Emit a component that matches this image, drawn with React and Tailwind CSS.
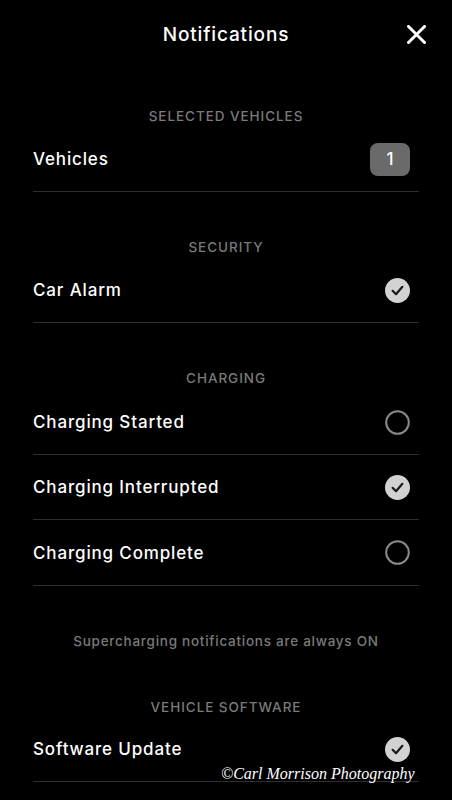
import React from "react";

const font = { fontFamily: "Inter, 'Noto Sans', sans-serif" };

function Checked() {
  return (
    <svg width="25" height="25" viewBox="0 0 25 25">
      <circle cx="12.5" cy="12.5" r="12.5" fill="#d2d2d2" />
      <path d="M7.6 12.8 L11 16.2 L17.4 8.8" fill="none" stroke="#1a1a1a" strokeWidth="2.2" strokeLinecap="round" strokeLinejoin="round" />
    </svg>
  );
}

function Unchecked() {
  return (
    <svg width="25" height="25" viewBox="0 0 25 25">
      <circle cx="12.5" cy="12.5" r="11.3" fill="none" stroke="#8a8a8a" strokeWidth="2" />
    </svg>
  );
}

function Row({ label, right, h = "h-[65px]" }) {
  return (
    <div className={`flex ${h} items-center justify-between border-b border-[#2e2e2e]`}>
      <span className="pt-[2px] text-[17px] font-medium tracking-[0.05em] text-white">{label}</span>
      <div className="pr-[9px] flex items-center">{right}</div>
    </div>
  );
}

export default function App() {
  return (
    <div className="relative w-[452px] h-[800px] overflow-hidden bg-black" style={font}>
      <div className="relative flex h-[68px] items-center justify-center">
        <span className="pt-[2px] text-[19px] font-medium text-white tracking-[0.045em]">Notifications</span>
        <svg className="absolute right-[26px] top-[25px]" width="19" height="19" viewBox="0 0 19 19">
          <path d="M1.5 1.5 L17.5 17.5 M17.5 1.5 L1.5 17.5" stroke="#fff" strokeWidth="3" strokeLinecap="round" />
        </svg>
      </div>
      <div className="px-[33px]">
        <div className="pt-[39px] flex justify-center">
          <div className="h-5 leading-[18px] text-[13.5px] font-medium tracking-[0.07em] text-[#7a7a7a]">SELECTED VEHICLES</div>
        </div>
        <Row
          label="Vehicles"
          right={
            <div className="mt-[1px] flex h-[33px] w-[40px] items-center justify-center rounded-[8px] bg-[#6a6a6a] text-[17px] font-medium text-white">
              1
            </div>
          }
        />
        <div className="pt-[46px] flex justify-center">
          <div className="h-5 leading-[18px] text-[13.5px] font-medium tracking-[0.07em] text-[#7a7a7a]">SECURITY</div>
        </div>
        <Row label="Car Alarm" right={<Checked />} />
        <div className="pt-[47px] flex justify-center">
          <div className="h-5 leading-[16px] text-[13.5px] font-medium tracking-[0.07em] text-[#7a7a7a]">CHARGING</div>
        </div>
        <Row label="Charging Started" right={<Unchecked />} />
        <Row label="Charging Interrupted" right={<Checked />} />
        <Row label="Charging Complete" right={<Unchecked />} h="h-[66px]" />
        <div className="pt-[45px] flex justify-center">
          <div className="h-5 leading-5 text-[13.5px] font-medium tracking-[0.055em] text-[#7a7a7a]">Supercharging notifications are always ON</div>
        </div>
        <div className="pt-[46px] flex justify-center">
          <div className="h-5 leading-5 text-[13.5px] font-medium tracking-[0.07em] text-[#7a7a7a]">VEHICLE SOFTWARE</div>
        </div>
        <Row label="Software Update" right={<Checked />} />
      </div>
      <div
        className="absolute left-[221px] top-[762px] text-[16px] italic text-white leading-6"
        style={{ fontFamily: "'Liberation Serif', serif" }}
      >
        ©Carl Morrison Photography
      </div>
    </div>
  );
}
